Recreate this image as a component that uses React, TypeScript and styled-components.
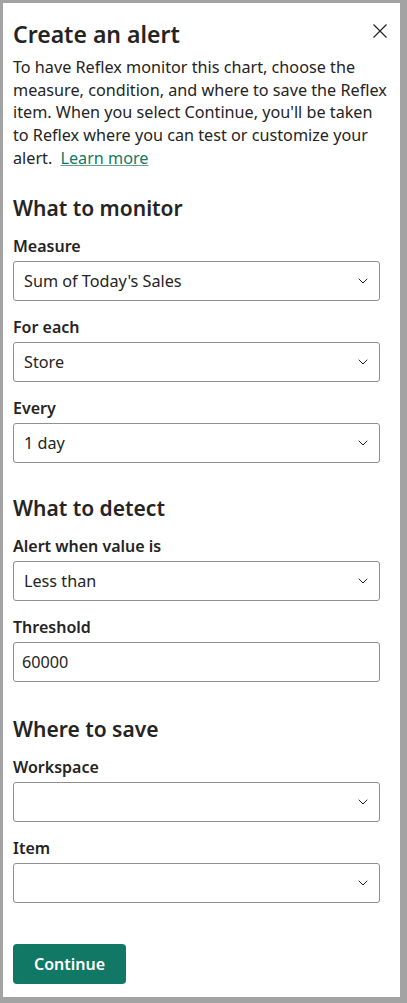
import React from "react";
import styled, { createGlobalStyle } from "styled-components";

const Global = createGlobalStyle`
  html, body {
    margin: 0;
    padding: 0;
    background: #a3a3a3;
  }
  body {
    font-family: "Noto Sans", "Open Sans", sans-serif;
    color: #252423;
  }
`;

const Frame = styled.div`
  padding: 3px 7px 6px 3px;
  width: 407px;
  height: 1003px;
  box-sizing: border-box;
`;

const Panel = styled.div`
  background: #ffffff;
  height: 100%;
  box-sizing: border-box;
  padding: 16px 8px 0 10px;
  display: flex;
  flex-direction: column;
`;

const Header = styled.div`
  display: flex;
  justify-content: space-between;
  align-items: flex-start;
`;

const Title = styled.h1`
  margin: 0;
  font-size: 23px;
  line-height: 30px;
  font-weight: 600;
`;

const CloseButton = styled.button`
  border: none;
  background: none;
  padding: 0;
  margin: 2px 2px 0 0;
  width: 20px;
  height: 20px;
  display: flex;
  align-items: center;
  justify-content: center;
  color: #252423;
  cursor: pointer;
`;

const Description = styled.p`
  margin: 7px 0 0 0;
  font-size: 16.2px;
  line-height: 22.7px;
  white-space: nowrap;
`;

const Link = styled.a`
  color: #117865;
  text-decoration: underline;
  text-decoration-color: #5fa596;
  margin-left: 4px;
`;

const Section = styled.section<{ $top: number }>`
  margin-top: ${(p) => p.$top}px;
  display: flex;
  flex-direction: column;
`;

const SectionTitle = styled.h2`
  margin: 0;
  font-size: 21px;
  line-height: 24px;
  font-weight: 600;
`;

const Field = styled.div`
  margin-top: 15px;
  display: flex;
  flex-direction: column;
`;

const Label = styled.label`
  font-size: 16px;
  line-height: 22px;
  font-weight: 600;
  margin-bottom: 4px;
`;

const Box = styled.div<{ $input?: boolean }>`
  width: 367px;
  height: 40px;
  box-sizing: border-box;
  border: 1px solid #8f8f8f;
  border-radius: 3px;
  display: flex;
  align-items: center;
  justify-content: space-between;
  padding: 0 11px 0 ${(p) => (p.$input ? 8 : 10)}px;
  font-size: 16.2px;
  color: #252423;
`;

const Chevron = () => (
  <svg width="10" height="6" viewBox="0 0 10 6" fill="none">
    <path d="M1 1l4 4 4-4" stroke="#252423" strokeWidth="1" strokeLinecap="round" strokeLinejoin="round" />
  </svg>
);

const Footer = styled.div`
  margin-top: 41px;
`;

const PrimaryButton = styled.button`
  background: #117865;
  color: #ffffff;
  border: none;
  border-radius: 4px;
  height: 40px;
  width: 113px;
  font-family: inherit;
  font-size: 16px;
  font-weight: 600;
  cursor: pointer;
`;

type FieldDef = { label: string; value?: string; input?: boolean };

const SelectField = ({ label, value, input }: FieldDef) => (
  <Field>
    <Label>{label}</Label>
    <Box $input={input}>
      <span>{value}</span>
      {!input && <Chevron />}
    </Box>
  </Field>
);

export default function App() {
  return (
    <>
      <Global />
      <Frame>
        <Panel>
          <Header>
            <Title>Create an alert</Title>
            <CloseButton aria-label="Close">
              <svg width="16" height="16" viewBox="0 0 16 16">
                <path d="M1.5 1.5l13 13M14.5 1.5l-13 13" stroke="#252423" strokeWidth="1.2" />
              </svg>
            </CloseButton>
          </Header>
          <Description>
            To have Reflex monitor this chart, choose the
            <br />
            measure, condition, and where to save the Reflex
            <br />
            item. When you select Continue, you'll be taken
            <br />
            to Reflex where you can test or customize your
            <br />
            alert. <Link href="#">Learn more</Link>
          </Description>

          <Section $top={26}>
            <SectionTitle>What to monitor</SectionTitle>
            <SelectField label="Measure" value="Sum of Today's Sales" />
            <SelectField label="For each" value="Store" />
            <SelectField label="Every" value="1 day" />
          </Section>

          <Section $top={33}>
            <SectionTitle>What to detect</SectionTitle>
            <SelectField label="Alert when value is" value="Less than" />
            <SelectField label="Threshold" value="60000" input />
          </Section>

          <Section $top={35}>
            <SectionTitle>Where to save</SectionTitle>
            <SelectField label="Workspace" />
            <SelectField label="Item" />
          </Section>

          <Footer>
            <PrimaryButton>Continue</PrimaryButton>
          </Footer>
        </Panel>
      </Frame>
    </>
  );
}
